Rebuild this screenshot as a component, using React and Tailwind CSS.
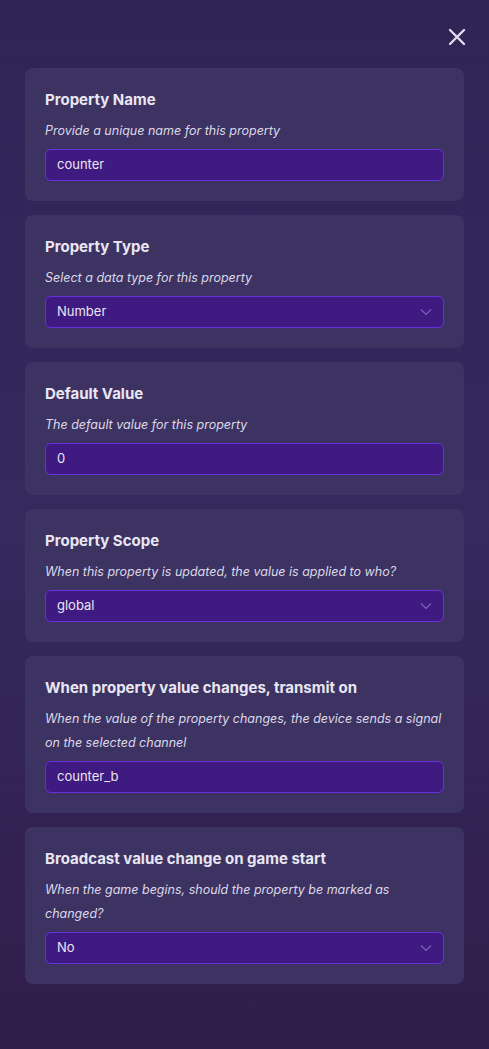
import React from "react";

const fields = [
  { title: "Property Name", desc: "Provide a unique name for this property", value: "counter", select: false },
  { title: "Property Type", desc: "Select a data type for this property", value: "Number", select: true },
  { title: "Default Value", desc: "The default value for this property", value: "0", select: false },
  { title: "Property Scope", desc: "When this property is updated, the value is applied to who?", value: "global", select: true },
  {
    title: "When property value changes, transmit on",
    desc: "When the value of the property changes, the device sends a signal on the selected channel",
    value: "counter_b",
    select: false,
  },
  {
    title: "Broadcast value change on game start",
    desc: "When the game begins, should the property be marked as changed?",
    value: "No",
    select: true,
  },
];

const Chevron = () => (
  <svg width="12" height="8" viewBox="0 0 12 8" fill="none">
    <path d="M1 1.5L6 6.5L11 1.5" stroke="#7a64b8" strokeWidth="1.2" />
  </svg>
);

export default function App() {
  return (
    <div
      className="min-h-[1049px] w-[489px] bg-gradient-to-b from-[#2e2456] via-[#342a5e] to-[#311d4b] text-[#e9e6f2]"
      style={{ fontFamily: "Inter, 'Noto Sans', sans-serif" }}
    >
      <div className="flex justify-end pt-[27px] pr-[22px] h-[68px]">
        <svg width="20" height="20" viewBox="0 0 20 20" fill="none">
          <path d="M3 3L17 17M17 3L3 17" stroke="#e0dcec" strokeWidth="2.4" strokeLinecap="round" />
        </svg>
      </div>
      <div className="flex flex-col gap-[14px] px-[25px]">
        {fields.map((f, i) => (
          <div key={i} className="rounded-[8px] bg-[#3d3362] px-5 pt-5 pb-5">
            <div className="text-[15px] leading-[24px] font-bold">{f.title}</div>
            <div className="mt-[7px] text-[12.5px] leading-[24px] italic text-[#dcd8e8]">{f.desc}</div>
            <div className="mt-[6px] flex h-[32px] items-center justify-between rounded-[6px] border border-[#6a2fdc] bg-[#3f1a80] pl-[11px] pr-[11px] text-[13px]">
              <span>{f.value}</span>
              {f.select && <Chevron />}
            </div>
          </div>
        ))}
      </div>
    </div>
  );
}
